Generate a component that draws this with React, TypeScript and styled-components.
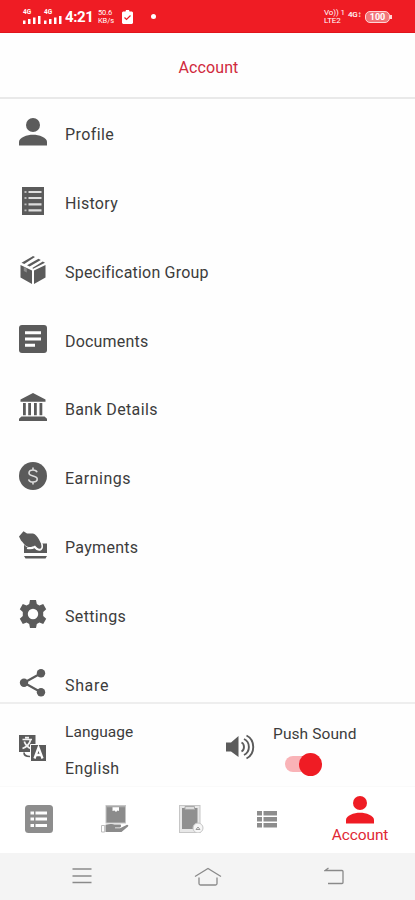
import React, { ReactNode } from "react";
import styled, { createGlobalStyle } from "styled-components";

const RED = "#ef1c24";
const GREY = "#5b5b5b";

const GlobalStyle = createGlobalStyle`
  * { box-sizing: border-box; }
  body { margin: 0; background: #fefefe; }
`;

const Screen = styled.div`
  width: 415px;
  height: 900px;
  display: flex;
  flex-direction: column;
  overflow: hidden;
  background: #fefefe;
  font-family: Roboto, "Liberation Sans", sans-serif;
  color: #3c3c3c;
`;

const StatusBar = styled.header`
  flex: none;
  height: 33px;
  padding: 1px 23px 0;
  display: flex;
  align-items: center;
  justify-content: space-between;
  background: ${RED};
  border-bottom: 1px solid #e0141c;
  color: #fff;
`;

const StatusGroup = styled.div<{ $gap: number }>`
  display: flex;
  align-items: center;
  gap: ${(p) => p.$gap}px;
`;

const Clock = styled.span`
  font-size: 15px;
  font-weight: 700;
  line-height: 16px;
  width: 30px;
  letter-spacing: -0.4px;
`;

const Signal = styled.div`
  width: 18px;
  height: 16px;
  font-size: 6.5px;
  line-height: 6px;
  font-weight: 700;
  svg { display: block; margin-top: 1px; }
`;

const Stacked = styled.div<{ $size: number; $width: number }>`
  display: flex;
  flex-direction: column;
  width: ${(p) => p.$width}px;
  font-size: ${(p) => p.$size}px;
  line-height: 8px;
  font-weight: 400;
  white-space: nowrap;
  letter-spacing: -0.1px;
`;

const Network = styled.span`
  font-size: 8px;
  font-weight: 500;
  line-height: 8px;
  width: 17px;
  margin-bottom: 4px;
  letter-spacing: -0.2px;
`;

const Battery = styled.div`
  width: 25px;
  height: 12px;
  border-radius: 5px;
  border: 1px solid #ffd5d6;
  background: #f27579;
  font-size: 9px;
  line-height: 10px;
  font-weight: 700;
  text-align: center;
`;

const BatteryTip = styled.i`
  width: 2px;
  height: 4px;
  background: #ffd5d6;
`;

const Dot = styled.i`
  width: 5px;
  height: 5px;
  margin-left: 15px;
  border-radius: 50%;
  background: #fff;
`;

const TitleBar = styled.h1`
  flex: none;
  height: 66px;
  margin: 0;
  padding: 5px 0 0 2px;
  display: flex;
  align-items: center;
  justify-content: center;
  border-bottom: 2px solid #e9e9e9;
  background: #fefefe;
  color: #d02a3c;
  font-size: 16px;
  font-weight: 400;
  letter-spacing: 0.1px;
`;

const Menu = styled.ul`
  flex: none;
  height: 603px;
  margin: 0;
  padding: 1px 0 0;
  list-style: none;
  overflow: hidden;
`;

const MenuRow = styled.li`
  height: 68.85px;
  padding-left: 19px;
  display: flex;
  align-items: flex-start;
  gap: 18px;
`;

const IconBox = styled.span`
  flex: none;
  width: 28px;
  height: 28px;
  margin-top: 18px;
  svg { display: block; }
`;

const Label = styled.span<{ $track?: number }>`
  font-size: 16px;
  line-height: 20px;
  white-space: nowrap;
  letter-spacing: ${(p) => p.$track ?? 0.3}px;
`;

const RowLabel = styled(Label)`
  margin-top: 25px;
`;

const Preferences = styled.section`
  flex: none;
  height: 85px;
  padding: 18px 0 0 19px;
  display: flex;
  border-top: 2px solid #eeeeee;
  border-bottom: 1px solid #fafafa;
`;

const PreferenceIcon = styled.span<{ $width: number; $top: number }>`
  flex: none;
  width: ${(p) => p.$width}px;
  padding-top: ${(p) => p.$top}px;
  svg { display: block; }
`;

const LanguageText = styled.div`
  width: 161px;
  display: flex;
  flex-direction: column;
  gap: 17px;
`;

const SoundText = styled.div`
  display: flex;
  flex-direction: column;
  padding-top: 2px;
  gap: 8px;
`;

const SmallLabel = styled(Label)`
  font-size: 15.5px;
`;

const Track = styled.button`
  position: relative;
  width: 37px;
  height: 24px;
  margin: 0 0 0 12px;
  padding: 0;
  border: 0;
  display: flex;
  align-items: center;
  justify-content: flex-end;
  background: none;

  &::before {
    content: "";
    position: absolute;
    left: 0;
    top: 4px;
    width: 32px;
    height: 16px;
    border-radius: 8px;
    background: #f9b3b7;
  }
`;

const Thumb = styled.i`
  position: relative;
  width: 23px;
  height: 23px;
  border-radius: 50%;
  background: ${RED};
`;

const Tabs = styled.nav`
  flex: none;
  height: 66px;
  display: grid;
  grid-template-columns: 77px 76px 76px 76px 110px;
  justify-items: center;
  background: #fff;
`;

const Tab = styled.div<{ $top: number; $active?: boolean }>`
  padding-top: ${(p) => p.$top}px;
  display: flex;
  flex-direction: column;
  align-items: center;
  gap: 1px;
  color: ${(p) => (p.$active ? "#df2835" : "#909090")};
  font-size: 15.5px;
  line-height: 20px;
  letter-spacing: -0.1px;
  svg { display: block; }
`;

const SystemNav = styled.footer`
  flex: 1;
  display: grid;
  grid-template-columns: 163px 90px 163px;
  justify-items: center;
  padding-top: 14px;
  background: #f4f4f4;
`;

const Svg = ({ w = 28, h = 28, color = GREY, children }: { w?: number; h?: number; color?: string; children: ReactNode }) => (
  <svg width={w} height={h} viewBox={`0 0 ${w} ${h}`} fill={color} aria-hidden="true">
    {children}
  </svg>
);

const PersonIcon = ({ color = GREY }: { color?: string }) => (
  <Svg color={color}>
    <circle cx="14" cy="7" r="7" />
    <path d="M0 27.500V24c0-4.500 8-7.200 14-7.200s14 2.700 14 7.200v3.500z" />
  </Svg>
);

const HistoryIcon = () => (
  <Svg>
    <path d="M3 0h22v28H3z" />
    <path stroke="#ddd" strokeWidth="2.200" d="M9.500 5H22.500M9.500 11H22.500M9.500 17.300H22.500M9.500 23.300H22.500" />
    <path stroke="#bbb" strokeWidth="1.800" d="M5.500 5h2M5.500 11h2M5.500 17.300h2M5.500 23.300h2" />
  </Svg>
);

const BoxIcon = () => (
  <Svg>
    <path d="M1.500 9 13 14.500V28L1.500 21.500zM26.500 9 15 14.500V28l11.500-6.500z" />
    <path d="m2.500 6.700 10-5.700L14 0l2 1L5.300 8zM8 9.300 19.500 2.800l2.300 1.200L10.600 10.600zM13.300 12 23.800 5.600l2.200 1.200-11.800 6z" />
    <path fill="#fefefe" d="m4.800 11 3 1.500v4l-3-1.500z" opacity=".3" />
  </Svg>
);

const DocumentIcon = () => (
  <Svg>
    <rect width="28" height="28" rx="3" />
    <path stroke="#fefefe" strokeWidth="3" d="M6 7.700h16M6 14h16M6 20.300h10" />
  </Svg>
);

const BankIcon = () => (
  <Svg>
    <path d="m14 0 12.500 6.500v2.300h-25V6.500zM2.500 23.500h23l2.500 2.300V28H0v-2.200z" />
    <path d="M4 10h2.800v12.300H4zM9.200 10H12v12.300H9.200zM15 10h2.800v12.300H15zM20.500 10h2.800v12.300h-2.800z" />
  </Svg>
);

const DollarIcon = () => (
  <Svg>
    <circle cx="14" cy="14" r="14" />
    <path
      fill="none"
      stroke="#ddd"
      strokeWidth="1.600"
      d="M18 10.300c-.5-1.700-2-2.300-4-2.300-2.300 0-4 1-4 3 0 4 8.200 2 8.200 6 0 2-1.900 3-4.200 3-2.200 0-4-.8-4.300-2.700M14 5.500V8m0 12v2.500"
    />
  </Svg>
);

const PaymentIcon = () => (
  <Svg>
    <path d="M0 5.500 4.500.3 8 2.500h6c2.500.3 4.500 3.500 6 6l2.500 5c1 2.500 0 4.500-2 4.300-1.500-.1-3-1.800-4.500-3.300-3 1.500-5 2-8 1-2.500-.8-3.500-3.800-6-6z" />
    <path d="M5 13.800c3 4 8 4 10.500 2.400 2 2.300 4.500 3.600 6.500 2.400 2-1.300 2-4.100 1.300-6.100H28V22H5z" />
    <path fill="none" stroke="#fefefe" strokeWidth="1.400" d="M8 17.200c3 .8 5.500.4 7.500-.9 2 2.300 4.500 3.500 6.300 2.300 1.700-1.200 1.700-3.600 1-5.600" />
    <path d="M5 25h23l-1.500 2.500h-20z" />
  </Svg>
);

const GearIcon = () => (
  <Svg>
    <path
      fillRule="evenodd"
      d="M11 0h6l.8 4 2.600 1.500 3.800-1.400 3 5.200-3 2.700v4l3 2.700-3 5.200-3.800-1.400-2.600 1.500-.8 4h-6l-.8-4-2.600-1.500-3.800 1.400-3-5.200 3-2.700v-4l-3-2.700 3-5.200 3.800 1.400L10.200 4zM14 8.800a5.200 5.200 0 1 0 0 10.400 5.200 5.200 0 0 0 0-10.400z"
    />
  </Svg>
);

const ShareIcon = () => (
  <Svg>
    <path fill="none" stroke={GREY} strokeWidth="2.200" d="M22 4.200 5 13.700l17 9.500" />
    <circle cx="22" cy="4.200" r="4.200" />
    <circle cx="5" cy="13.700" r="4.200" />
    <circle cx="22" cy="23.200" r="4.200" />
  </Svg>
);

const TranslateIcon = () => (
  <Svg>
    <rect width="16.500" height="17" />
    <path fill="none" stroke="#f3f3f3" strokeWidth="1.700" d="M3.500 4.500H13M6 2.600h4M5.300 6.500c1 3.500 4 6 7 7.300M11.500 5c-.8 4-4.300 7-8 8.500" />
    <path fill="none" stroke={GREY} strokeWidth="1.700" d="M5 17.500c0 3 2 4 6 4" />
    <path stroke="#fefefe" d="M11.500 9.500h16v17h-16z" />
    <path fill="none" stroke="#fefefe" strokeWidth="2.300" d="m15.500 23.500 4-11 4 11M17 20h5" />
  </Svg>
);

const SpeakerIcon = () => (
  <Svg w={29} h={26}>
    <path d="M0 8.500h5l7.500-6.500v21L5 17.500H0z" />
    <path
      fill="none"
      stroke={GREY}
      strokeWidth="1.900"
      d="M15.500 8.500c3.300 1.500 3.300 7.500 0 9M18 5c6.500 3 6.500 13 0 16M20.500 1.500c9 4.500 9 18.500 0 23"
    />
  </Svg>
);

const SignalIcon = () => (
  <Signal>
    4G
    <Svg w={18} h={8} color="#fff">
      <path d="M0 4.500h2.500V8H0zM5 3h2.500v5H5zM10 1.500h2.500V8H10zM15 0h2.500v8H15z" />
    </Svg>
  </Signal>
);

const ClipboardCheckIcon = () => (
  <Svg w={11} h={14} color="#fff">
    <path d="M1 1.500h2.500L4 0h3l.5 1.500H10l1 1V13l-1 1H1l-1-1V2.500z" />
    <path fill="none" stroke={RED} strokeWidth="1.200" d="m2.500 7.500 2 2 4-4" />
  </Svg>
);

const OrdersIcon = () => (
  <Svg color="#8d8d8d">
    <rect width="28" height="28" rx="3.500" />
    <path stroke="#fefefe" strokeWidth="3.200" d="M5.500 8H9M10.500 8H22M5.500 14H9M10.500 14H22M5.500 20.500H9M10.500 20.500H22" />
  </Svg>
);

const DeliveryIcon = () => (
  <Svg color="#8b8b8b">
    <rect x="5" y=".5" width="19.500" height="17.500" fill="#8b8b8b" stroke="#c5c5c5" />
    <path fill="#fefefe" d="M11.500 2h6.500v4l-1.500-.5L15 7l-1.500-1.500-2 .5z" />
    <path fill="#aaa" d="M5 1h19v1.300H5z" />
    <path d="M4.500 19.800c5-1.500 8-.3 10-.3h5c1 1 .6 2.500-.5 3h-5v.8h5l7-3.500c1.200 0 1.700.8 1 1.600L20.500 27H4.500z" />
    <path fill="#fff" stroke="#bcbcbc" d="M.5 20.500h3.200V27H.5z" />
  </Svg>
);

const TaskIcon = () => (
  <Svg w={26} color="#909090">
    <rect x="1.500" y=".5" width="20.500" height="27" fill="#e8e8e8" stroke="#c6c6c6" />
    <path d="M4 3h15.500v18l-3 3H4z" />
    <path fill="#ddd" stroke="#aaa" d="M7 1.500h9.500v3H7z" />
    <circle cx="20" cy="23" r="5" fill="#f6f6f6" stroke="#c5c5c5" />
    <path fill="none" stroke="#999" d="m18 24.500 2-2.500 2 2.500z" />
  </Svg>
);

const ListIcon = () => (
  <Svg w={20} h={17} color="#8d8d8d">
    <path d="M0 0h5v4.500H0zM6.500 0H20v4.500H6.500zM0 6h5v4.500H0zM6.500 6H20v4.500H6.500zM0 12h5v4.500H0zM6.500 12H20v4.500H6.500z" />
  </Svg>
);

const rows: { label: string; icon: ReactNode; track: number }[] = [
  { label: "Profile", icon: <PersonIcon />, track: 0.4 },
  { label: "History", icon: <HistoryIcon />, track: 0.3 },
  { label: "Specification Group", icon: <BoxIcon />, track: 0.2 },
  { label: "Documents", icon: <DocumentIcon />, track: 0.2 },
  { label: "Bank Details", icon: <BankIcon />, track: 0.35 },
  { label: "Earnings", icon: <DollarIcon />, track: 0.5 },
  { label: "Payments", icon: <PaymentIcon />, track: 0.3 },
  { label: "Settings", icon: <GearIcon />, track: 0.35 },
  { label: "Share", icon: <ShareIcon />, track: 0.65 },
];

export default function App() {
  return (
    <>
      <GlobalStyle />
      <Screen>
        <StatusBar>
          <StatusGroup $gap={3}>
            <SignalIcon />
            <SignalIcon />
            <Clock>4:21</Clock>
            <Stacked $size={7.5} $width={21}>
              <span>50.6</span>
              <span>KB/s</span>
            </Stacked>
            <ClipboardCheckIcon />
            <Dot />
          </StatusGroup>
          <StatusGroup $gap={0}>
            <Stacked $size={8} $width={24}>
              <span>Vo)) 1</span>
              <span>LTE2</span>
            </Stacked>
            <Network>4G↕</Network>
            <StatusGroup $gap={0}>
              <Battery>100</Battery>
              <BatteryTip />
            </StatusGroup>
          </StatusGroup>
        </StatusBar>
        <TitleBar>Account</TitleBar>
        <Menu>
          {rows.map((row) => (
            <MenuRow key={row.label}>
              <IconBox>{row.icon}</IconBox>
              <RowLabel $track={row.track}>{row.label}</RowLabel>
            </MenuRow>
          ))}
        </Menu>
        <Preferences>
          <PreferenceIcon $width={46} $top={13}>
            <TranslateIcon />
          </PreferenceIcon>
          <LanguageText>
            <SmallLabel $track={0.05}>Language</SmallLabel>
            <Label $track={0.4}>English</Label>
          </LanguageText>
          <PreferenceIcon $width={47} $top={12}>
            <SpeakerIcon />
          </PreferenceIcon>
          <SoundText>
            <SmallLabel $track={0.1}>Push Sound</SmallLabel>
            <Track role="switch" aria-checked="true" aria-label="Push Sound">
              <Thumb />
            </Track>
          </SoundText>
        </Preferences>
        <Tabs>
          <Tab $top={18}>
            <OrdersIcon />
          </Tab>
          <Tab $top={18}>
            <DeliveryIcon />
          </Tab>
          <Tab $top={18}>
            <TaskIcon />
          </Tab>
          <Tab $top={24}>
            <ListIcon />
          </Tab>
          <Tab $top={9} $active>
            <PersonIcon color={RED} />
            Account
          </Tab>
        </Tabs>
        <SystemNav>
          <Svg w={20} h={18}>
            <path stroke="#8a8a8a" strokeWidth="1.400" d="M.5 2h19M.5 9h19M.5 15.500h19" />
          </Svg>
          <Svg w={28} h={20}>
            <path fill="none" stroke="#8a8a8a" strokeWidth="1.300" d="M1 9.500 14 1.500l13 8M5 10.500v6q0 1.500 1.500 1.500h15q1.500 0 1.500-1.500v-6" />
          </Svg>
          <Svg w={21} h={19}>
            <path fill="none" stroke="#8a8a8a" strokeWidth="1.300" d="M4 16.500h14q1 0 1-1V4.500q0-1-1-1H1M4.500 1 1 3.500h4" />
          </Svg>
        </SystemNav>
      </Screen>
    </>
  );
}
